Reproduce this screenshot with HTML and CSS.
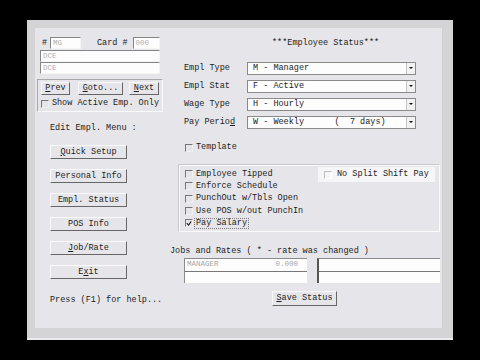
FILE: index.html
```html
<!DOCTYPE html>
<html lang="en">
<head>
<meta charset="UTF-8">
<title>Employee Status</title>
<link rel="stylesheet" href="styles.css">
</head>
<body>

<div class="window">
  <div class="panel">

    <div class="left">
      <div class="id-row">
        <span class="hash">#</span>
        <span class="field f-num">MG</span>
        <span class="card-lbl">Card #</span>
        <span class="field f-card">000</span>
      </div>
      <div class="field f-wide f-first">DCE</div>
      <div class="field f-wide">DCE</div>

      <div class="nav-group">
        <div class="nav-buttons">
          <span class="btn b-prev"><u>P</u>rev</span>
          <span class="btn b-goto"><u>G</u>oto...</span>
          <span class="btn b-next"><u>N</u>ext</span>
        </div>
        <div class="check"><span class="box"></span>Show Active Emp. Only</div>
      </div>

      <div class="menu-title">Edit Empl. Menu :</div>
      <div class="menu">
        <span class="btn menu-btn"><u>Q</u>uick Setup</span>
        <span class="btn menu-btn">Personal Info</span>
        <span class="btn menu-btn">Empl. Status</span>
        <span class="btn menu-btn">POS Info</span>
        <span class="btn menu-btn"><u>J</u>ob/Rate</span>
        <span class="btn menu-btn">E<u>x</u>it</span>
      </div>
      <div class="help">Press (F1) for help...</div>
    </div>

    <div class="right">
      <div class="title">***Employee Status***</div>

      <div class="form">
        <span class="lbl">Empl Type</span>
        <div class="select"><span>M - Manager</span><span class="drop"></span></div>
        <span class="lbl">Empl Stat</span>
        <div class="select"><span>F - Active</span><span class="drop"></span></div>
        <span class="lbl">Wage Type</span>
        <div class="select"><span>H - Hourly</span><span class="drop"></span></div>
        <span class="lbl">Pay Perio<u>d</u></span>
        <div class="select"><span>W - Weekly      (  7 days)</span><span class="drop"></span></div>
      </div>

      <div class="check template"><span class="box"></span>Template</div>

      <div class="opt-group">
        <div class="opt-list">
          <div class="check"><span class="box"></span>Employee Tipped</div>
          <div class="check"><span class="box"></span>Enforce Schedule</div>
          <div class="check"><span class="box"></span>PunchOut w/Tbls Open</div>
          <div class="check"><span class="box"></span>Use POS w/out PunchIn</div>
          <div class="check"><span class="box checked"><svg width="7" height="7" viewBox="0 0 7 7"><polyline points="1,3 3,5.5 6,1" fill="none" stroke="#111" stroke-width="1.2"/></svg></span><span class="focus">Pay Salary</span></div>
        </div>
        <div class="split">
          <div class="check off"><span class="box"></span>No Split Shift Pay</div>
        </div>
      </div>

      <div class="jobs-title">Jobs and Rates ( * - rate was changed )</div>
      <div class="jobs">
        <div class="list list-left">
          <div class="row"><span>MANAGER</span><span>0.000</span></div>
          <div class="row"></div>
        </div>
        <div class="list list-right">
          <div class="row"></div>
          <div class="row"></div>
        </div>
      </div>

      <span class="btn save"><u>S</u>ave Status</span>
    </div>

  </div>
</div>

</body>
</html>
```

FILE: styles.css
```css
body {
    margin: 0;
    padding: 20px 27px;
    background-color: #000;
    font-family: "Liberation Mono", "DejaVu Sans Mono", monospace;
    font-size: 8.5px;
    line-height: 9px;
    color: #1c1c1c;
}

.window {
    width: 426px;
    height: 320px;
    box-sizing: border-box;
    padding: 8px 10px 10px 8px;
    background-color: #d4d4d6;
    border-bottom: 2px solid #ececee;
}

.panel {
    height: 100%;
    display: grid;
    grid-template-columns: 135px 1fr;
    background-color: #e6e6ea;
    border-right: 1px solid #cfcfd2;
}

/* left column */
.left {
    padding-top: 9px;
}

.id-row {
    display: flex;
    align-items: center;
    height: 12px;
    margin-left: 5px;
}

.hash {
    margin-left: 2px;
    width: 5px;
    margin-right: 3px;
}

.card-lbl {
    margin-left: 16px;
    margin-right: 5px;
}

.field {
    display: block;
    box-sizing: border-box;
    height: 12px;
    padding: 1px 2px 0;
    background-color: #fdfdfd;
    border: 1px solid;
    border-color: #858585 #f4f4f4 #f4f4f4 #858585;
    color: #b0b0b0;
    font-size: 7.5px;
    line-height: 9px;
}

.f-num { width: 31px; }
.f-card { width: 27px; }

.f-wide {
    width: 120px;
    margin-left: 5px;
}

.f-first { margin-top: 1px; }

.nav-group {
    width: 126px;
    box-sizing: border-box;
    margin: 5px 0 0 2px;
    padding: 2px 3px 3px;
    border: 1px solid;
    border-color: #a8a8aa #fafafa #fafafa #a8a8aa;
}

.nav-buttons {
    display: flex;
}

.btn {
    display: flex;
    align-items: center;
    justify-content: center;
    box-sizing: border-box;
    background-color: #e6e6ea;
    border: 1px solid;
    border-color: #fafafa #666 #666 #fafafa;
}

.b-prev { width: 29px; height: 13px; }
.b-goto { width: 45px; height: 13px; margin-left: 8px; }
.b-next { width: 30px; height: 13px; margin-left: 6px; }

.check {
    display: flex;
    align-items: center;
    height: 9px;
    white-space: pre;
}

.nav-group .check {
    margin-top: 4px;
}

.box {
    display: flex;
    align-items: center;
    justify-content: center;
    width: 8px;
    height: 8px;
    box-sizing: border-box;
    margin-right: 3px;
    border: 1px solid;
    border-color: #777 #f0f0f0 #f0f0f0 #777;
}

.menu-title {
    margin: 12px 0 0 15px;
}

.menu {
    display: flex;
    flex-direction: column;
    gap: 10px;
    margin: 12px 0 0 15px;
}

.menu-btn {
    width: 77px;
    height: 14px;
}

.help {
    margin: 17px 0 0 15px;
}

/* right column */
.right {
    padding-top: 11px;
}

.title {
    margin-left: 102px;
}

.form {
    display: grid;
    grid-template-columns: 77px 169px;
    grid-auto-rows: 13px;
    row-gap: 5px;
    align-items: center;
    margin-top: 14px;
}

.lbl {
    padding-left: 14px;
}

.select {
    height: 13px;
    box-sizing: border-box;
    display: flex;
    align-items: center;
    justify-content: space-between;
    padding-left: 5px;
    background-color: #fdfdfd;
    border: 1px solid #8a8a8a;
    white-space: pre;
}

.drop {
    position: relative;
    width: 9px;
    height: 11px;
    box-sizing: border-box;
    border-left: 1px solid #c4c4c4;
    background-color: #f2f2f4;
}

.drop::after {
    content: "";
    position: absolute;
    left: 2px;
    top: 4px;
    border-left: 2px solid transparent;
    border-right: 2px solid transparent;
    border-top: 2px solid #111;
}

.template {
    margin: 14px 0 0 15px;
}

.opt-group {
    display: flex;
    width: 262px;
    height: 68px;
    box-sizing: border-box;
    margin: 12px 0 0 8px;
    padding: 3px 4px 0 6px;
    border: 1px solid;
    border-color: #c8c8cc #fafafa #fafafa #c8c8cc;
    box-shadow: inset 1px 1px 0 #fafafa;
}

.opt-list .check {
    height: 12.3px;
}

.focus {
    outline: 1px dotted #777;
    outline-offset: 0;
    padding: 0 1px;
    margin-left: -1px;
}

.split {
    margin: -1px 0 0 auto;
    width: 117px;
    height: 15px;
    box-sizing: border-box;
    padding: 3px 0 0 6px;
    background-color: #f6f6f8;
}

.check.off {
    color: #222;
}

.check.off .box {
    border-color: #c0c0c0 #fff #fff #c0c0c0;
    margin-right: 5px;
}

.jobs-title {
    margin-top: 15px;
    white-space: pre;
}

.jobs {
    display: flex;
    margin: 2px 0 0 14px;
}

.list {
    box-sizing: border-box;
    border-top: 1px solid #8a8a8a;
}

.list-left {
    width: 123px;
    border-left: 1px solid #8a8a8a;
}

.list-right {
    width: 123px;
    margin-left: 10px;
    border-left: 2px solid #555;
}

.row {
    display: flex;
    justify-content: space-between;
    height: 12px;
    box-sizing: border-box;
    padding: 1px 9px 0 2px;
    background-color: #fdfdfd;
    color: #a8a8a8;
    font-size: 7.5px;
}

.row + .row {
    border-top: 1px solid #777;
}

.save {
    width: 65px;
    height: 15px;
    margin: 8px 0 0 102px;
}
```
